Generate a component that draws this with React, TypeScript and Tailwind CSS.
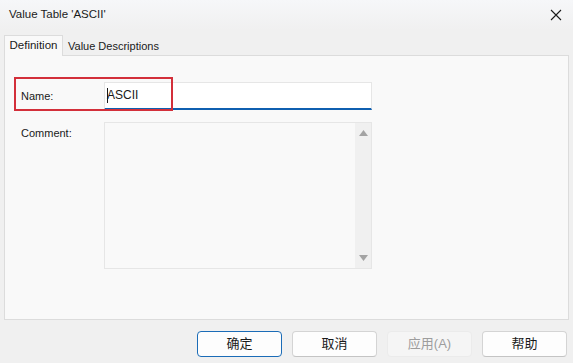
import React from "react";

const font = { fontFamily: '"Liberation Sans", "Noto Sans CJK SC", sans-serif' };

const DialogButton = ({ label, primary, disabled }: { label: string; primary?: boolean; disabled?: boolean }) => (
  <button
    className={
      "w-[85px] h-[26px] rounded-[4px] text-[13px] flex items-center justify-center " +
      (primary
        ? "bg-[#fdfdfd] border border-[#1b6cb7] text-[#1a1a1a]"
        : disabled
        ? "bg-[#f5f5f5] border border-[#ebebeb] text-[#9d9d9d]"
        : "bg-[#fdfdfd] border border-[#d4d4d4] border-b-[#c4c4c4] text-[#1a1a1a]")
    }
  >
    {label}
  </button>
);

export default function App() {
  return (
    <div className="w-[573px] h-[363px] bg-[#f0f0f0] flex flex-col overflow-hidden" style={font}>
      {/* title bar */}
      <div className="h-[30px] flex items-center justify-between pl-[9px] pr-[11px] bg-gradient-to-b from-[#f6f7f9] to-[#f0f0f0]">
        <span className="text-[11.5px] text-[#1a1a1a]">Value Table 'ASCII'</span>
        <svg width="12" height="12" viewBox="0 0 12 12">
          <path d="M1 1 L11 11 M11 1 L1 11" stroke="#1a1a1a" strokeWidth="1.1" />
        </svg>
      </div>

      {/* tabs */}
      <div className="flex items-end h-[25px] pl-[4px]">
        <div className="h-[21px] w-[59px] bg-[#f9f9f9] border border-b-0 border-[#dcdcdc] flex items-center justify-center text-[11.5px] text-[#1a1a1a] relative top-[1px] z-10">
          Definition
        </div>
        <div className="h-[18px] px-[4px] flex items-center text-[11px] text-[#1a1a1a] ml-[1px]">Value Descriptions</div>
      </div>

      {/* panel */}
      <div className="mx-[4px] h-[265px] bg-[#f9f9f9] border border-[#dcdcdc] pl-[9px] pt-[21px]">
        <div className="relative flex items-start">
          <span className="w-[90px] pl-[7px] pt-[11px] text-[11px] text-[#1a1a1a]">Name:</span>
          <div className="mt-[5px] w-[268px] h-[28px] bg-white border border-[#e6e6e6] border-b-2 border-b-[#0f5fb0] flex items-start pt-[4px] pl-[2px]">
            <span className="w-px h-[15px] bg-[#1a1a1a] mt-[1px]" />
            <span className="text-[12px] text-[#1a1a1a] leading-[16px] -ml-px">ASCII</span>
          </div>
          {/* annotation highlight */}
          <div className="absolute left-0 top-0 w-[159px] h-[34px] border-2 border-[#d32f3a] pointer-events-none" />
        </div>
        <div className="flex mt-[12px]">
          <span className="w-[90px] pl-[7px] pt-[3px] text-[11px] text-[#1a1a1a]">Comment:</span>
          <div className="w-[268px] h-[147px] bg-[#f9f9f9] border border-[#e6e6e6] flex justify-end">
            <div className="w-[16px] h-full bg-[#f0f0f0] flex flex-col items-center justify-between py-[7px]">
              <svg width="9" height="6" viewBox="0 0 9 6">
                <path d="M0 6 L4.5 0 L9 6 Z" fill="#a3a3a3" />
              </svg>
              <svg width="9" height="6" viewBox="0 0 9 6">
                <path d="M0 0 L9 0 L4.5 6 Z" fill="#a3a3a3" />
              </svg>
            </div>
          </div>
        </div>
      </div>

      {/* buttons */}
      <div className="flex justify-end gap-[10px] pr-[6px] mt-[11px]">
        <DialogButton label="确定" primary />
        <DialogButton label="取消" />
        <DialogButton label="应用(A)" disabled />
        <DialogButton label="帮助" />
      </div>
    </div>
  );
}
